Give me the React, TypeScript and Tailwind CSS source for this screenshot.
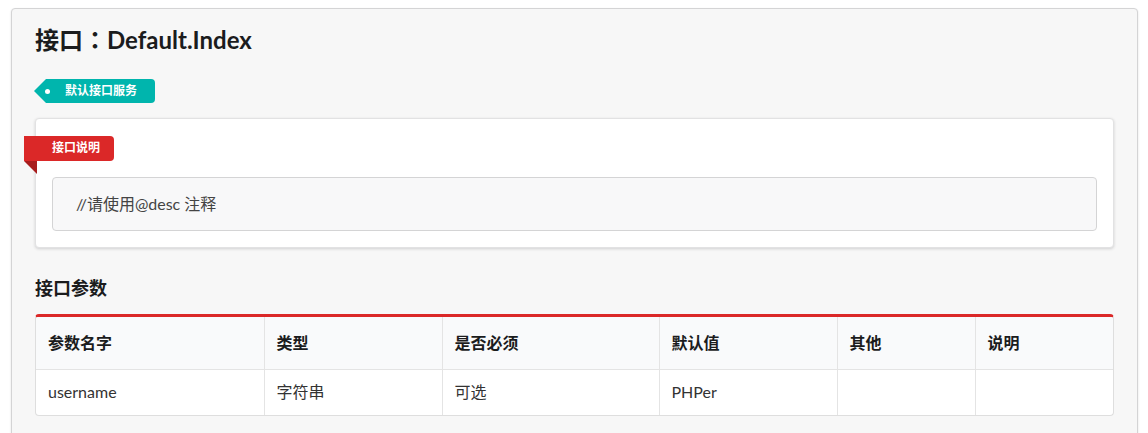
import React from 'react';

const columns = [
  { title: '参数名字', width: 'w-[228px]' },
  { title: '类型', width: 'w-[178px]' },
  { title: '是否必须', width: 'w-[217px]' },
  { title: '默认值', width: 'w-[178px]' },
  { title: '其他', width: 'w-[138px]' },
  { title: '说明', width: '' },
];

const rows = [['username', '字符串', '可选', 'PHPer', '', '']];

const App = () => {
  return (
    <div className="min-h-screen bg-white pt-2 pl-[11px] pr-[10px] font-['Lato','Noto_Sans_CJK_SC',sans-serif] text-[16px] text-[#222]">
      <div className="rounded border border-[#d4d4d5] bg-[#f7f7f7] px-[23px] pt-[15px] pb-8 shadow-[0_1px_2px_0_rgba(34,36,38,0.15)]">
        {/* Title */}
        <h1 className="text-[24px] font-bold leading-[30px] text-[#1b1c1d]">
          接口<span className="font-['Noto_Sans_CJK_TC',sans-serif]">：</span>Default.Index
        </h1>

        {/* Tag label */}
        <div className="mt-[24px] flex">
          <div className="ml-[-1px] flex h-6 items-center rounded-r bg-[#00b5ad] pl-[11px] pr-[18px] text-[12px] font-bold text-white [clip-path:polygon(12px_0,100%_0,100%_100%,12px_100%,0_50%)]">
            <span className="mr-[15px] h-[5px] w-[5px] rounded-full bg-white" />
            默认接口服务
          </div>
        </div>

        {/* Description segment */}
        <div className="relative mt-[15px] rounded border border-[#e2e2e3] bg-white px-4 pt-[15px] pb-4 shadow-[0_1px_3px_0_rgba(34,36,38,0.18)]">
          <div className="relative ml-[-28px] inline-flex h-[25px] w-[90px] items-center rounded-r bg-[#db2828] pl-[28px] text-[12px] font-bold text-white">
            接口说明
            <span className="absolute left-0 top-full h-0 w-0 border-r-[13px] border-b-[13px] border-r-[#a81d1d] border-b-transparent" />
          </div>
          <div className="mt-4 flex h-[54px] items-center rounded border border-[#d4d4d5] bg-[#f8f8f9] px-[23px] text-[16px] text-[#444]">
            //请使用@desc 注释
          </div>
        </div>

        {/* Params */}
        <h2 className="mt-[28px] text-[18px] font-bold leading-6 text-[#1b1c1d]">接口参数</h2>
        <div className="mt-[14px] overflow-hidden rounded border border-t-[3px] border-[#dedede] border-t-[#db2828] bg-white">
          <table className="w-full table-fixed border-collapse">
            <thead>
              <tr className="h-[53px] bg-[#f9fafb]">
                {columns.map((c, i) => (
                  <th
                    key={c.title}
                    className={`${c.width} px-3 text-left font-bold text-[#1b1c1d] ${i > 0 ? 'border-l border-[#e4e4e4]' : ''}`}
                  >
                    {c.title}
                  </th>
                ))}
              </tr>
            </thead>
            <tbody>
              {rows.map((r, ri) => (
                <tr key={ri} className="h-[45px] border-t border-[#e4e4e4]">
                  {r.map((cell, i) => (
                    <td key={i} className={`px-3 text-[#333] ${i > 0 ? 'border-l border-[#e4e4e4]' : ''}`}>
                      {cell}
                    </td>
                  ))}
                </tr>
              ))}
            </tbody>
          </table>
        </div>
      </div>
    </div>
  );
};

export default App;
